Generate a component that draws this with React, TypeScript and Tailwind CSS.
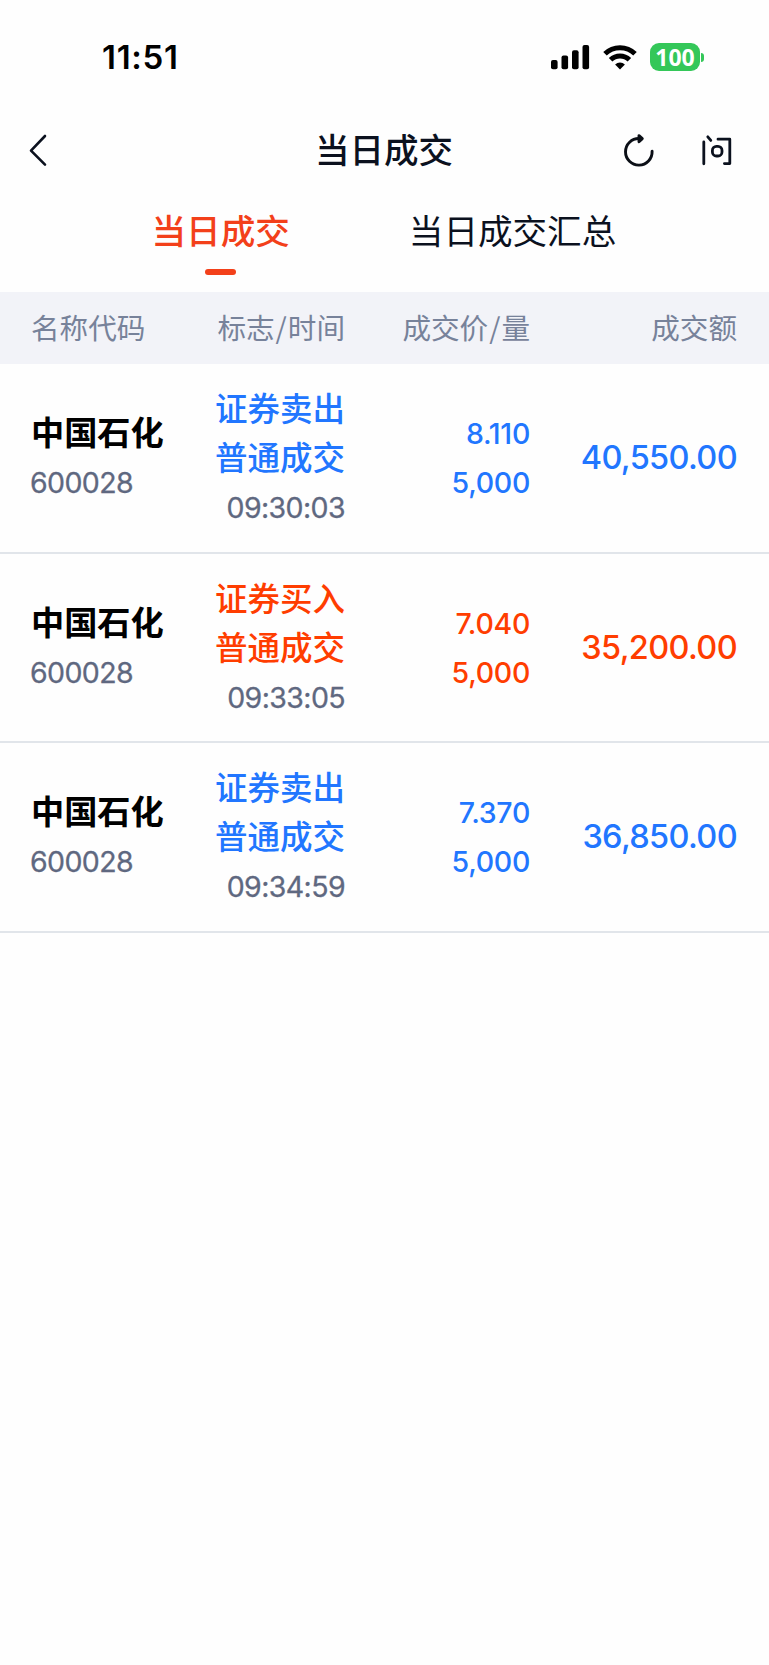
import React from 'react';

interface Deal {
    name: string;
    code: string;
    side: 'buy' | 'sell';
    action: string;
    kind: string;
    time: string;
    price: string;
    volume: string;
    amount: string;
}

const deals: Deal[] = [
    { name: '中国石化', code: '600028', side: 'sell', action: '证券卖出', kind: '普通成交', time: '09:30:03', price: '8.110', volume: '5,000', amount: '40,550.00' },
    { name: '中国石化', code: '600028', side: 'buy', action: '证券买入', kind: '普通成交', time: '09:33:05', price: '7.040', volume: '5,000', amount: '35,200.00' },
    { name: '中国石化', code: '600028', side: 'sell', action: '证券卖出', kind: '普通成交', time: '09:34:59', price: '7.370', volume: '5,000', amount: '36,850.00' },
];

const StatusBar = () => (
    <div className="flex h-[114px] items-center justify-between pl-[102px] pr-[65px]">
        <span className="pt-px text-[33px] leading-none font-semibold tracking-[0.7px] text-black">11:51</span>
        <div className="flex items-center">
            <svg className="mr-[13px]" width="39" height="26" viewBox="0 0 39 26" fill="#000">
                <rect x="0" y="16" width="6.6" height="9.2" rx="2" />
                <rect x="10.5" y="11.5" width="6.6" height="13.7" rx="2" />
                <rect x="21" y="6.2" width="6.6" height="19" rx="2" />
                <rect x="31.5" y="1" width="6.6" height="24.2" rx="2" />
            </svg>
            <svg className="mr-[13px]" width="34" height="26" viewBox="0 0 34 26" fill="none" stroke="#000" strokeWidth="5">
                <path d="M2 9.8a21.4 21.4 0 0 1 30 0" />
                <path d="M7.6 15.8a13.4 13.4 0 0 1 18.8 0" />
                <path d="M17 25.4l-4.9-5a7 7 0 0 1 9.8 0z" fill="#000" stroke="none" />
            </svg>
            <div className="flex h-[28px] w-[50px] items-center justify-center rounded-[9px] bg-[#34c759] text-[23px] leading-none font-bold text-white [font-family:'Open_Sans',sans-serif]">
                100
            </div>
            <div className="ml-px h-[9px] w-[3px] rounded-r-full bg-[#34c759]" />
        </div>
    </div>
);

const NavBar = () => (
    <div className="grid h-[74px] grid-cols-3 items-center pl-[28px] pr-[35px]">
        <svg width="20" height="34" viewBox="0 0 20 34" fill="none" stroke="#0b111e" strokeWidth="2.6" strokeLinecap="round" strokeLinejoin="round">
            <path d="M17 2L3 16.6l14 14" />
        </svg>
        <h1 className="pt-px pl-[6px] text-center text-[34.5px] leading-none font-medium whitespace-nowrap">当日成交</h1>
        <div className="flex items-center justify-end gap-[45px]">
            <svg width="34" height="34" viewBox="0 0 34 34" fill="none" stroke="#0b0f16" strokeWidth="2.9" strokeLinecap="round" strokeLinejoin="round">
                <path d="M29.1 17.2A13.3 13.3 0 1 1 16.2 4.5" />
                <path d="M16 1.6L19.3 4.6 16 7.8z" fill="#0b0f16" />
            </svg>
            <svg width="32" height="34" viewBox="0 0 32 34" fill="none" stroke="#0b111e" strokeWidth="2.8" strokeLinecap="round" strokeLinejoin="round">
                <path d="M1.8 8v21.8M5.8 2.8L8.8 6.4M16 5.2H27.8V29.6H22.4" />
                <rect x="10.4" y="12.4" width="9.6" height="9.6" rx="4" />
            </svg>
        </div>
    </div>
);

const Tabs = () => (
    <div className="flex h-[104px] items-start pl-[151.5px] pt-[26px] text-[34.6px] leading-[35px]">
        <div className="flex flex-col items-center text-[#f3401a]">
            <span className="font-medium">当日成交</span>
            <span className="mt-[20px] h-[6px] w-[31px] rounded-full bg-[#f3401a]" />
        </div>
        <span className="ml-[119px]">当日成交汇总</span>
    </div>
);

const columns = 'grid grid-cols-[162px_152px_185px_207px] pl-[31px]';

const Slash = () => <span className="mx-px">/</span>;

const TableHead = () => (
    <div className={`${columns} h-[72px] items-center bg-[#f2f3f8] pb-[2px] text-[28.6px] leading-none text-[#77829a] [font-family:'Noto_Sans_CJK_SC',sans-serif]`}>
        <span>名称代码</span>
        <span className="text-right">标志<Slash />时间</span>
        <span className="text-right">成交价<Slash />量</span>
        <span className="text-right">成交额</span>
    </div>
);

const DealRow = ({ deal }: { deal: Deal }) => {
    const color = deal.side === 'buy' ? 'text-[#ff3d00]' : 'text-[#2176ff]';

    return (
        <div className={`${columns} h-[189.5px] items-center border-b-2 border-[#e1e5ea] leading-[49px]`}>
            <div className="pt-px">
                <div className="text-[33.2px] font-bold text-black">{deal.name}</div>
                <div className="-ml-px text-[28.5px] tracking-[-0.6px] text-[#5f6880] [-webkit-text-stroke:0.3px]">{deal.code}</div>
            </div>
            <div className="pt-[2px] text-right">
                <div className={`text-[32.5px] font-medium ${color}`}>{deal.action}</div>
                <div className={`text-[32.5px] font-medium ${color}`}>{deal.kind}</div>
                <div className="text-[28.5px] tracking-[-0.6px] text-[#5f6880] [-webkit-text-stroke:0.3px]">{deal.time}</div>
            </div>
            <div className={`pt-px text-right text-[28.5px] font-medium tracking-[-0.3px] ${color}`}>
                <div>{deal.price}</div>
                <div>{deal.volume}</div>
            </div>
            <div className={`text-right text-[32.5px] font-medium tracking-[-0.65px] ${color}`}>{deal.amount}</div>
        </div>
    );
};

const App: React.FC = () => (
    <div className="min-h-screen w-full bg-[#fefefe] text-[#0b111e] [font-family:Inter,'Noto_Sans_CJK_SC',sans-serif]" lang="zh-CN">
        <StatusBar />
        <NavBar />
        <Tabs />
        <TableHead />
        {deals.map((deal) => (
            <DealRow key={deal.time} deal={deal} />
        ))}
    </div>
);

export default App;
